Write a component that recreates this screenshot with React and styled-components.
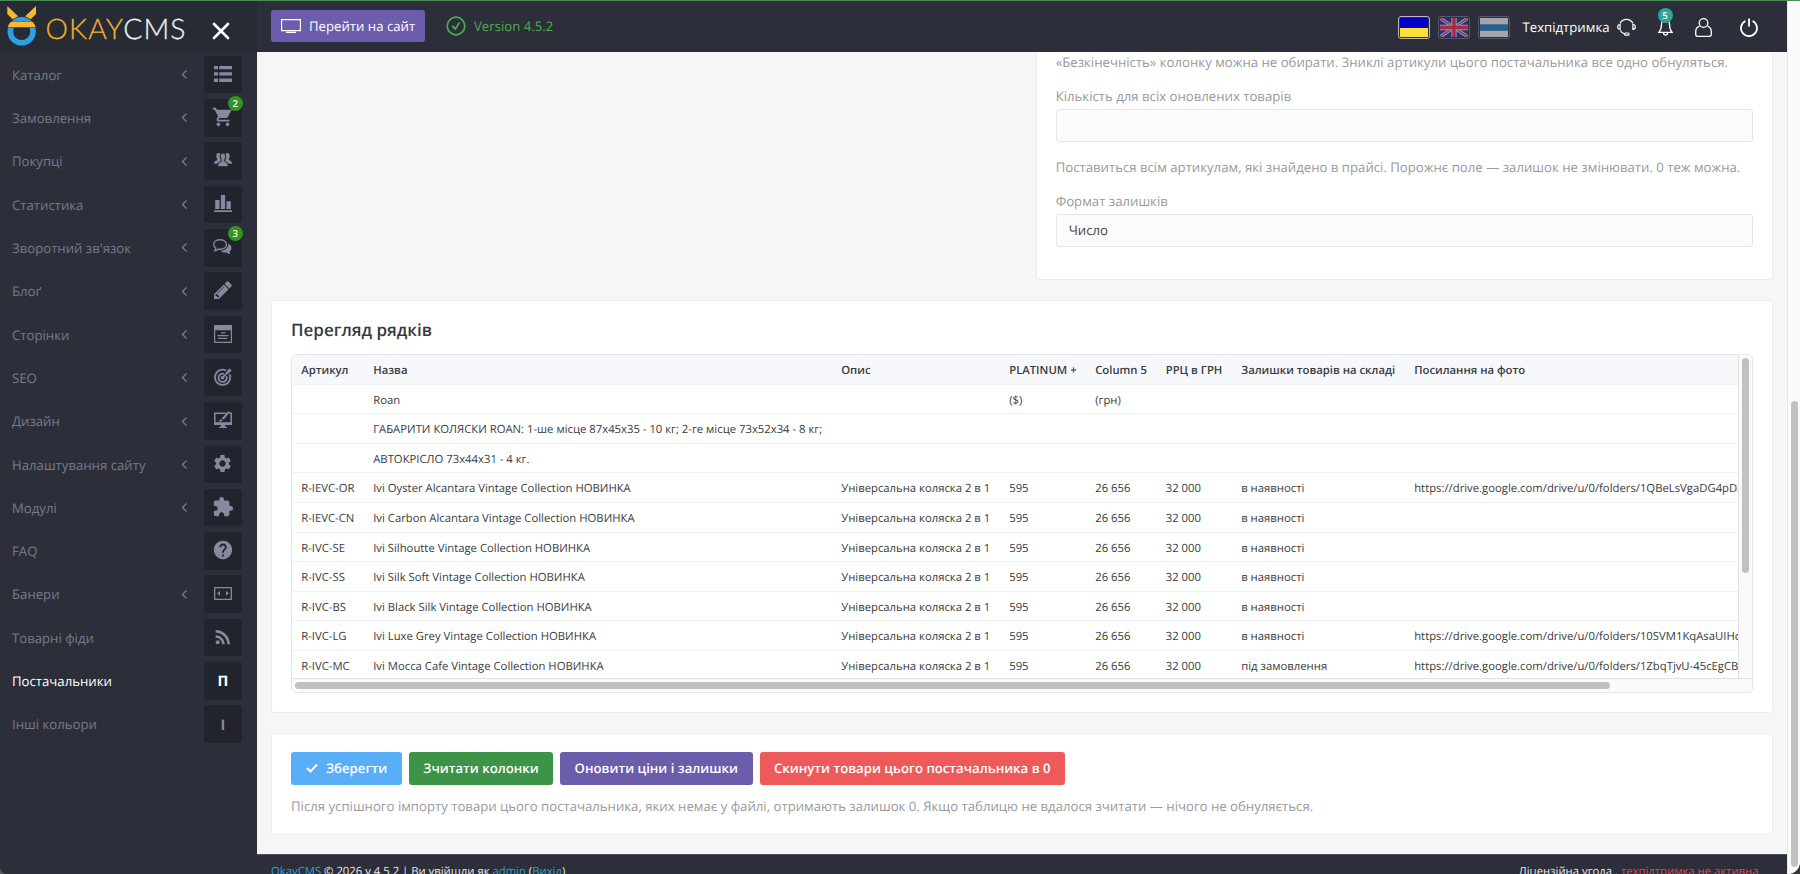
import styled, { createGlobalStyle, css } from 'styled-components';
import { MdShoppingCart, MdSettings, MdExtension, MdHelp, MdRssFeed } from 'react-icons/md';

const GlobalStyle = createGlobalStyle`
  * {
    box-sizing: border-box;
  }
  body {
    margin: 0;
    font-family: 'Open Sans', 'Noto Sans', sans-serif;
    font-size: 13.18px;
    text-rendering: geometricPrecision;
    color: #373a3c;
    background: #f6f6f6;
    overflow: hidden;
  }
  a {
    text-decoration: none;
  }
  svg {
    display: block;
    flex: none;
  }
`

const Page = styled.div`
  position: relative;
  width: 1800px;
  height: 874px;
  display: flex;
  overflow: hidden;
  background: #55575c;
  border-top: 1px solid #4b8b56;
`
const Sidebar = styled.aside`
  width: 257px;
  height: 873px;
  background: #2c2f3a;
  border-bottom-left-radius: 7px;
`
const SidebarTop = styled.div`
  height: 51.5px;
  background: #262b34;
  display: flex;
  align-items: flex-start;
  padding: 5px 0 0 7px;
`
const LogoText = styled.div`
  font-family: Lato, sans-serif;
  font-weight: 300;
  font-size: 28.4px;
  line-height: 30px;
  margin: 8px 0 0 8.5px;
  width: 166.5px;
  letter-spacing: 1.1px;
  color: #eef0f2;
  -webkit-text-stroke: 0.3px;
  span {
    color: #f0ad30;
  }
`
const Menu = styled.nav`
  display: flex;
  flex-direction: column;
  gap: 5.8px;
  padding-top: 3.4px;
`
const MenuItem = styled.a`
  height: 37.5px;
  display: flex;
  align-items: center;
  padding: 0 15.3px 0 12px;
  color: ${({ $active }) => ($active ? '#fff' : '#757b8c')};
`
const MenuLabel = styled.span`
  flex: 1;
  line-height: 20px;
  padding-top: 0.4px;
`
const Chevron = styled.svg`
  margin-right: 16.8px;
`
const MenuIcon = styled.span`
  position: relative;
  width: 37.5px;
  height: 37.5px;
  display: flex;
  align-items: center;
  justify-content: center;
  padding-top: 2px;
  border-radius: 3px;
  background: #21242d;
  color: ${({ $active }) => ($active ? '#fff' : '#848ba0')};
  font-weight: 700;
  font-size: 14.5px;
  svg {
    margin-top: -3.5px;
  }
`
const Badge = styled.span`
  position: absolute;
  width: 15px;
  height: 15px;
  border-radius: 50%;
  top: ${({ $top }) => $top || '-3px'};
  right: ${({ $right }) => $right || '-1px'};
  background: ${({ $color }) => $color || '#37931f'};
  color: #fff;
  font-size: 9.5px;
  font-weight: 600;
  line-height: 15px;
  text-align: center;
`

const Main = styled.main`
  width: 1530px;
  height: 873px;
  display: flex;
  flex-direction: column;
  background: #f6f6f6;
`
const Header = styled.header`
  height: 50.5px;
  flex: none;
  display: flex;
  align-items: center;
  padding: 0 29px 0 14px;
  background: #2c2f3a;
`
const SiteButton = styled.a`
  width: 154px;
  height: 32px;
  display: flex;
  align-items: center;
  gap: 8px;
  padding-left: 10px;
  border-radius: 3px;
  background: #6c5cac;
  color: #fff;
`
const Version = styled.div`
  display: flex;
  align-items: center;
  gap: 8px;
  flex: 1;
  margin-left: 21px;
  color: #4bae4c;
`
const Flag = styled.span`
  width: 32px;
  height: 23px;
  margin-right: 8.3px;
  padding: 1px;
  border: 1px solid ${({ $active }) => ($active ? '#b9b9b9' : '#56596a')};
  border-radius: 3px;
`
const HeaderLinks = styled.div`
  display: flex;
  align-items: center;
  color: #fff;
  margin-top: 2px;
`
const Support = styled.span`
  width: 86.5px;
  margin: 0 8px 0 4px;
  white-space: nowrap;
`
const IconLink = styled.a`
  position: relative;
  display: flex;
  color: #fff;
  margin-left: ${({ $left }) => $left || 0}px;
`

const Body = styled.div`
  flex: none;
  height: 802.5px;
  overflow: hidden;
  padding: 0 14.5px 0 14px;
  display: flex;
  flex-direction: column;
`
const card = css`
  background: #fff;
  border: 1px solid #ececec;
  border-radius: 3px;
`
const SettingsCard = styled.section`
  ${card}
  flex: none;
  align-self: flex-end;
  width: 736.6px;
  height: 228.5px;
  border-top: 0;
  border-radius: 0 0 3px 3px;
  padding: 0 18.5px 0 18.8px;
`
const Hint = styled.p`
  margin: 0;
  line-height: 21px;
  color: #999;
  white-space: nowrap;
`
const Field = styled.label`
  display: block;
  margin: 12px 0 14.5px;
  line-height: 22px;
  color: #999;
`
const Control = styled.div`
  height: 33px;
  margin-top: 2.5px;
  padding: 0 12px;
  border: 1px solid #e6e6e6;
  border-radius: 3px;
  background: #fbfbfb;
  color: #444;
  line-height: 31px;
`
const PreviewCard = styled.section`
  ${card}
  flex: none;
  height: 412.5px;
  margin: 20px 0 20.5px;
  padding: 16px 19px 0;
`
const Title = styled.h2`
  margin: 0;
  height: 36.5px;
  font-size: 17px;
  line-height: 26px;
  font-weight: 600;
  color: #373a3c;
`
const TableFrame = styled.div`
  height: 339px;
  display: grid;
  grid-template-columns: 1fr 14px;
  grid-template-rows: 1fr 13.5px;
  border: 1px solid #e4e7ee;
  border-radius: 5px;
  overflow: hidden;
`
const TableView = styled.div`
  min-width: 0;
  min-height: 0;
  overflow: hidden;
`
const Row = styled.div`
  display: grid;
  grid-template-columns: 72px 468px 168px 86px 70.5px 75.5px 173px 400px;
  width: 1514px;
  height: ${({ $head }) => ($head ? 30.2 : 29.58)}px;
  border-bottom: 1px solid #eef0f4;
  background: ${({ $head }) => ($head ? '#f6f8fc' : '#fff')};
  font-size: 11.3px;
  font-weight: ${({ $head }) => ($head ? 600 : 400)};
  line-height: 31px;
  white-space: nowrap;
  color: #3a3c40;
`
const Cell = styled.span`
  height: 28.5px;
  padding-left: 9.2px;
`
const ScrollY = styled.div`
  padding: 3px;
  border-left: 1px solid #e2e2e2;
  background: #fafafa;
`
const ScrollX = styled.div`
  padding: 2.5px 3px;
  grid-column: 1 / 3;
  border-top: 1px solid #e2e2e2;
  background: #fafafa;
`
const Thumb = styled.div`
  width: ${({ $w }) => $w}px;
  height: ${({ $h }) => $h}px;
  border-radius: 4px;
  background: #c1c1c1;
`
const ActionsCard = styled.section`
  ${card}
  flex: none;
  height: 102px;
  padding: 17.5px 19px 0;
`
const Actions = styled.div`
  display: flex;
  gap: 7px;
  margin-bottom: 11px;
`
const Button = styled.button`
  width: ${({ $w }) => $w}px;
  height: 33.5px;
  display: flex;
  align-items: center;
  justify-content: center;
  gap: 8px;
  padding: 0;
  border: 0;
  border-radius: 3px;
  background: ${({ $color }) => $color};
  color: #fff;
  font: 600 13.18px 'Open Sans', sans-serif;
  text-rendering: inherit;
  white-space: nowrap;
`
const Footer = styled.footer`
  height: 20px;
  flex: none;
  overflow: hidden;
  display: flex;
  justify-content: space-between;
  padding: 6.5px 28.5px 0 14px;
  background: #2c2f3a;
  border-top: 1px solid #50535f;
  color: #e8e8ea;
  font-size: 11.3px;
  line-height: 20px;
  white-space: nowrap;
  a {
    color: #35a0cd;
  }
  em {
    font-style: normal;
    color: #d84b50;
  }
`
const PageScroll = styled.div`
  width: 13px;
  height: 873px;
  padding: 399.5px 0 0 2.5px;
  border-left: 1px solid #e8e8e8;
  background: #fafafa;
`
const Corner = styled.svg`
  position: absolute;
  right: 0;
  bottom: 0;
`

const Svg = ({ w = 18, h = w, box = `0 0 ${w} ${h}`, line, children, ...rest }) => (
  <svg
    width={w}
    height={h}
    viewBox={box}
    fill={line ? 'none' : 'currentColor'}
    stroke={line ? 'currentColor' : 'none'}
    strokeWidth={line}
    {...rest}
  >
    {children}
  </svg>
)

const CloseIcon = styled(Svg)`
  margin-top: 15.5px;
  color: #fff;
`

const Logo = () => (
  <Svg w={30} h={41}>
    <circle cx="14.7" cy="25.4" r="11.4" fill="none" stroke="#2f9fe4" strokeWidth="5.6" />
    <path d="M.3 15.8h28.8v5.9H.3z" fill="#262b34" />
    <path d="M5.5 15.3C8 12.3 11 11 14.7 11s6.7 1.3 9.2 4.3z" fill="#2f9fe4" />
    <path d="M3.6 16h22.2c1.5 1.6 2.3 3.3 2.9 5.2H.8c.5-2 1.3-3.6 2.8-5.2z" fill="#fbb52f" />
    <path d="M.3 0l10.8 10.2-5.5 3L.3 8zM29 0L18.2 10.2l5.5 3L29 8z" fill="#fbb52f" />
  </Svg>
)

const ListIcon = () => (
  <Svg w={18} h={16}>
    <path d="M0 0h4v3.3H0zM5.2 0H18v3.3H5.2zM0 6.3h4v3.3H0zM5.2 6.3H18v3.3H5.2zM0 12.6h4v3.3H0zM5.2 12.6H18v3.3H5.2z" />
  </Svg>
)
const UsersIcon = () => (
  <Svg w={18} h={14}>
    <path d="M4.6 0C6 0 6.4.5 6.2 1.3c-.7 1.500-.5 3.200.1 4.500.3.700.6 1.300.5 1.900-.2 1-1.600 1.200-2.400 1.800-.5.400-.8.800-1 1.300H0c.1-2 .5-2.500 1.700-3 1-.4 1.600-.6 1.600-1.200 0-.5-1-1.500-1-3.500C2.300 1.200 3 0 4.600 0z" />
    <path d="M13.4 0C12 0 11.6.5 11.8 1.3c.7 1.500.5 3.200-.1 4.500-.3.700-.6 1.300-.5 1.900.2 1 1.600 1.200 2.400 1.800.5.400.8.800 1 1.300H18c-.1-2-.5-2.500-1.700-3-1-.4-1.600-.6-1.600-1.200 0-.5 1-1.500 1-3.500C15.700 1.200 15 0 13.400 0z" />
    <path d="M9 .3c1.700 0 2.500 1.300 2.500 3 0 2-1.200 3.100-1.200 4.300 0 2 3.800 1 3.900 5.900H3.800c.1-4.900 3.900-3.900 3.900-5.900 0-1.200-1.200-2.300-1.200-4.300 0-1.700.8-3 2.500-3z" stroke="#21242d" strokeWidth=".6" />
  </Svg>
)
const BarsIcon = () => (
  <Svg w={18} h={17}>
    <path d="M1.2 5h4.300v9H1.200zM6.900 0h4.200v14H6.900zM12.500 6.300h4.300V14h-4.300zM0 15.200h18v1.800H0z" />
  </Svg>
)
const ChatIcon = () => (
  <Svg w={19} h={16}>
    <path d="M7 .7c3.600 0 6.400 2 6.400 4.800S10.600 10.300 7 10.300c-.6 0-1.200 0-1.700-.2-.9 1-2.200 1.500-3.400 1.600.6-.7 1-1.600.9-2.600C1.400 8.200.7 7 .7 5.500.7 2.700 3.500.7 7 .7z" fill="none" stroke="currentColor" strokeWidth="1.4" />
    <path d="M15.300 4.800C17.300 5.700 18.500 7.300 18.500 9c0 1.500-.8 2.700-2 3.500 0 1 .4 1.900 1.100 2.600-1.500 0-2.800-.5-3.800-1.500-2.400.4-4.700-.3-6-1.800 4.400-.1 7.700-2.800 7.500-7z" />
  </Svg>
)
const PencilIcon = () => (
  <Svg w={18} box="128 128 1536 1536">
    <path d="M491 1536l91-91-235-235-91 91v107h128v128h107zm523-928q0-22-22-22-10 0-17 7l-542 542q-7 7-7 17 0 22 22 22 10 0 17-7l542-542q7-7 7-17zm-54-192l416 416-832 832h-416v-416zm683 96q0 53-37 90l-166 166-416-416 166-165q36-38 90-38 53 0 91 38l235 234q37 39 37 91z" />
  </Svg>
)
const PagesIcon = () => (
  <Svg w={18} h={18}>
    <path d="M.6 1v16.400h16.800V1" fill="none" stroke="currentColor" strokeWidth="1.2" />
    <path d="M1 0h16a1 1 0 0 1 1 1v4.200H0V1a1 1 0 0 1 1-1zM7 7.300h4.500v1.300H7zM3.500 10h11v1.300h-11zM4.200 12.700h9v1.300h-9z" />
  </Svg>
)
const TargetIcon = () => (
  <Svg w={18} h={18}>
    <g fill="none" stroke="currentColor" strokeWidth="1.8">
      <path d="M12 2.500A7.600 7.600 0 1 0 15.600 6.300" />
      <path d="M10.100 6a4.100 4.100 0 1 0 2.300 2.200" />
      <path d="M8.500 9.600l6-6" />
    </g>
    <circle cx="8.5" cy="9.7" r="1.8" />
    <path d="M12.500 3.500L16 0l.3 1.800L18 2l-3.500 3.500h-2z" />
  </Svg>
)
const DesignIcon = () => (
  <Svg w={18} h={18}>
    <path d="M.8 12V2.200h11.500M15.500 2.200h1.700V12" fill="none" stroke="currentColor" strokeWidth="1.5" />
    <path d="M0 11.300h18v2.600H0zM7 14h4v1.800h2V17H5v-1.200h2z" />
    <path d="M14.600 0l1.400 1.300-6.600 7.500-1.600-1.500zM7 8l1.600 1.500c-.8 1-2.300 1.200-4.300 1.200C5.800 9.900 5.800 8.800 7 8z" />
  </Svg>
)
const BannerIcon = () => (
  <Svg w={18} h={13}>
    <path d="M.7.7h16.600v11.600H.7z" fill="none" stroke="currentColor" strokeWidth="1.3" />
    <path d="M6 3.800v5L3.200 6.300zM12 3.800v5l2.800-2.500z" />
  </Svg>
)

const MENU = [
  { label: 'Каталог', icon: <ListIcon />, sub: true },
  { label: 'Замовлення', icon: <MdShoppingCart size={22} />, sub: true, badge: 2 },
  { label: 'Покупці', icon: <UsersIcon />, sub: true },
  { label: 'Статистика', icon: <BarsIcon />, sub: true },
  { label: "Зворотний зв'язок", icon: <ChatIcon />, sub: true, badge: 3 },
  { label: 'Блоґ', icon: <PencilIcon />, sub: true },
  { label: 'Сторінки', icon: <PagesIcon />, sub: true },
  { label: 'SEO', icon: <TargetIcon />, sub: true },
  { label: 'Дизайн', icon: <DesignIcon />, sub: true },
  { label: 'Налаштування сайту', icon: <MdSettings size={21} />, sub: true },
  { label: 'Модулі', icon: <MdExtension size={22} />, sub: true },
  { label: 'FAQ', icon: <MdHelp size={22} /> },
  { label: 'Банери', icon: <BannerIcon />, sub: true },
  { label: 'Товарні фіди', icon: <MdRssFeed size={22} /> },
  { label: 'Постачальники', icon: 'П', active: true },
  { label: 'Інші кольори', icon: 'І' },
]

const COLUMNS = ['Артикул', 'Назва', 'Опис', 'PLATINUM +', 'Column 5', 'РРЦ в ГРН', 'Залишки товарів на складі', 'Посилання на фото']

const product = (sku, name, stock = 'в наявності', link = '') => [
  sku, `Ivi ${name} Vintage Collection НОВИНКА`, 'Універсальна коляска 2 в 1', '595', '26 656', '32 000', stock, link,
]

const ROWS = [
  ['', 'Roan', '', '($)', '(грн)', '', '', ''],
  ['', 'ГАБАРИТИ КОЛЯСКИ ROAN: 1-ше місце 87х45х35 - 10 кг; 2-ге місце 73х52х34 - 8 кг;', '', '', '', '', '', ''],
  ['', 'АВТОКРІСЛО 73х44х31 - 4 кг.', '', '', '', '', '', ''],
  product('R-IEVC-OR', 'Oyster Alcantara', 'в наявності', 'https://drive.google.com/drive/u/0/folders/1QBeLsVgaDG4pDX'),
  product('R-IEVC-CN', 'Carbon Alcantara'),
  product('R-IVC-SE', 'Silhoutte'),
  product('R-IVC-SS', 'Silk Soft'),
  product('R-IVC-BS', 'Black Silk'),
  product('R-IVC-LG', 'Luxe Grey', 'в наявності', 'https://drive.google.com/drive/u/0/folders/10SVM1KqAsaUIHc'),
  product('R-IVC-MC', 'Mocca Cafe', 'під замовлення', 'https://drive.google.com/drive/u/0/folders/1ZbqTjvU-45cEgCB'),
]

const SideMenu = () => (
  <Sidebar>
    <SidebarTop>
      <Logo />
      <LogoText><span>OKAY</span>CMS</LogoText>
      <CloseIcon w={18} line={2.6} strokeLinecap="round">
        <path d="M2 2l14 14M16 2L2 16" />
      </CloseIcon>
    </SidebarTop>
    <Menu>
      {MENU.map(({ label, icon, sub, badge, active }) => (
        <MenuItem key={label} $active={active}>
          <MenuLabel>{label}</MenuLabel>
          {sub && (
            <Chevron width="5" height="9" viewBox="0 0 5 9" fill="none" stroke="currentColor" strokeWidth="1.3">
              <path d="M4.500.5l-4 4 4 4" />
            </Chevron>
          )}
          <MenuIcon $active={active}>
            {icon}
            {badge && <Badge>{badge}</Badge>}
          </MenuIcon>
        </MenuItem>
      ))}
    </Menu>
  </Sidebar>
)

const TopBar = () => (
  <Header>
    <SiteButton>
      <Svg w={20} h={14} line={1.2}>
        <path d="M.6.6h18.800v11H.6zM5 13.300h10" />
      </Svg>
      Перейти на сайт
    </SiteButton>
    <Version>
      <Svg w={20} line={1.7}>
        <circle cx="10" cy="10" r="8.8" />
        <path d="M6.300 9.600l3 3.400 4.200-6.600" />
      </Svg>
      Version 4.5.2
    </Version>
    <HeaderLinks>
      <Flag $active>
        <Svg w={28} h={19}>
          <path d="M0 0h28v10H0z" fill="#0000c8" />
          <path d="M0 10h28v9H0z" fill="#fbe038" />
        </Svg>
      </Flag>
      <Flag>
        <Svg w={28} h={19}>
          <path d="M0 0h28v19H0z" fill="#243278" />
          <path d="M0 0l28 19M28 0L0 19" stroke="#8f92a3" strokeWidth="3.4" />
          <path d="M0 0l28 19M28 0L0 19" stroke="#a22b49" strokeWidth="1.2" />
          <path d="M14 0v19M0 9.500h28" stroke="#8f92a3" strokeWidth="5.4" />
          <path d="M14 0v19M0 9.500h28" stroke="#a22b49" strokeWidth="3.4" />
        </Svg>
      </Flag>
      <Flag>
        <Svg w={28} h={19}>
          <path d="M0 0h28v19H0z" fill="#a4a5ab" />
          <path d="M0 6.300h28v6.500H0z" fill="#28618f" />
        </Svg>
      </Flag>
      <Support>Техпідтримка</Support>
      <IconLink>
        <Svg w={19} h={18} line={1.2}>
          <path d="M3 5.600a7.100 7.100 0 0 1 13 0M3.400 12.500c.7 1.300 1.900 2.400 3.400 3.100" />
          <path d="M3.100 6.500v4.800C1.500 11.300.7 10.200.7 8.900s.8-2.400 2.400-2.400zM15.900 6.500v4.800c1.600 0 2.400-1.100 2.400-2.400s-.8-2.400-2.400-2.400z" />
          <rect x="7.5" y="15" width="4.500" height="2.2" rx="1" />
        </Svg>
      </IconLink>
      <IconLink $left={21.5}>
        <Svg w={15} h={18} line={1.3}>
          <path d="M7.500 1.500c-2.800 0-4 2-4 5 0 3.900-1.100 6.200-2.700 7.900h13.400c-1.600-1.700-2.700-4-2.700-7.900 0-3-1.200-5-4-5zM5.500 14.800c0 3 4 3 4 0" />
        </Svg>
        <Badge $color="#30a498" $top="-10.5px" $right="0px">5</Badge>
      </IconLink>
      <IconLink $left={22.5}>
        <Svg w={17} h={19} line={1.3}>
          <circle cx="8.5" cy="5" r="4.3" />
          <path d="M4.500 8.200C2 9 .7 11 .7 14v2.300c0 1.200.8 2 2 2h11.600c1.200 0 2-.8 2-2V14c0-3-1.300-5-3.800-5.800" />
        </Svg>
      </IconLink>
      <IconLink $left={28}>
        <Svg w={18} h={19} line={1.8}>
          <path d="M9 .5v8M5.400 3A8 8 0 1 0 12.600 3" />
        </Svg>
      </IconLink>
    </HeaderLinks>
  </Header>
)

const Preview = () => (
  <PreviewCard>
    <Title>Перегляд рядків</Title>
    <TableFrame>
      <TableView>
        <Row $head>
          {COLUMNS.map((name) => <Cell key={name}>{name}</Cell>)}
        </Row>
        {ROWS.map((row, i) => (
          <Row key={i}>
            {row.map((value, j) => <Cell key={j}>{value}</Cell>)}
          </Row>
        ))}
      </TableView>
      <ScrollY><Thumb $w={7.5} $h={215} /></ScrollY>
      <ScrollX><Thumb $w={1315} $h={7.5} /></ScrollX>
    </TableFrame>
  </PreviewCard>
)

const App = () => {
  return (
    <Page>
      <GlobalStyle />
      <SideMenu />
      <Main>
        <TopBar />
        <Body>
          <SettingsCard>
            <Hint>«Безкінечність» колонку можна не обирати. Зниклі артикули цього постачальника все одно обнуляться.</Hint>
            <Field>
              Кількість для всіх оновлених товарів
              <Control />
            </Field>
            <Hint>Поставиться всім артикулам, які знайдено в прайсі. Порожнє поле — залишок не змінювати. 0 теж можна.</Hint>
            <Field>
              Формат залишків
              <Control>Число</Control>
            </Field>
          </SettingsCard>
          <Preview />
          <ActionsCard>
            <Actions>
              <Button $color="#58aef7" $w={111}>
                <Svg w={12} h={10} line={2}>
                  <path d="M1 5l3.500 3.500L11 1.500" />
                </Svg>
                Зберегти
              </Button>
              <Button $color="#3c9449" $w={144}>Зчитати колонки</Button>
              <Button $color="#6c5cac" $w={192.5}>Оновити ціни і залишки</Button>
              <Button $color="#ee5a5a" $w={305.5}>Скинути товари цього постачальника в 0</Button>
            </Actions>
            <Hint>Після успішного імпорту товари цього постачальника, яких немає у файлі, отримають залишок 0. Якщо таблицю не вдалося зчитати — нічого не обнуляється.</Hint>
          </ActionsCard>
        </Body>
        <Footer>
          <span><a>OkayCMS</a> © 2026 v.4.5.2 | Ви увійшли як <a>admin</a> (<a>Вихід</a>)</span>
          <span>Ліцензійна угода , <em>техпідтримка не активна</em></span>
        </Footer>
      </Main>
      <PageScroll><Thumb $w={7.5} $h={466} /></PageScroll>
      <Corner width="10" height="10" viewBox="0 0 10 10">
        <path d="M10 0v10H0Q8 8 10 0z" fill="#34363a" />
      </Corner>
    </Page>
  )
}

export default App
